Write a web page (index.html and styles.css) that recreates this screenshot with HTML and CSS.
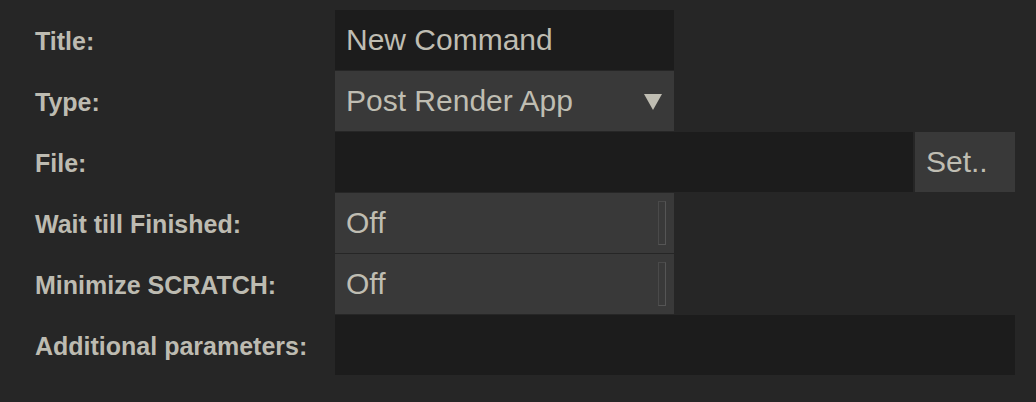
FILE: index.html
```html
<!DOCTYPE html>
<html>
<head>
<meta charset="utf-8">
<link rel="stylesheet" href="styles.css">
</head>
<body>
<div class="form">
  <div class="row">
    <div class="label">Title:</div>
    <div class="field dark narrow"><span class="val">New Command</span></div>
  </div>
  <div class="row">
    <div class="label">Type:</div>
    <div class="field light narrow select"><span class="val">Post Render App</span><span class="arrow"></span></div>
  </div>
  <div class="row">
    <div class="label">File:</div>
    <div class="field dark grow"></div>
    <div class="field light button"><span class="val">Set..</span></div>
  </div>
  <div class="row">
    <div class="label">Wait till Finished:</div>
    <div class="field light narrow toggle"><span class="val">Off</span><span class="knob"></span></div>
  </div>
  <div class="row">
    <div class="label">Minimize SCRATCH:</div>
    <div class="field light narrow toggle"><span class="val">Off</span><span class="knob"></span></div>
  </div>
  <div class="row">
    <div class="label">Additional parameters:</div>
    <div class="field dark wide"></div>
  </div>
</div>
</body>
</html>
```
FILE: styles.css
```css
html, body {
  margin: 0;
  padding: 0;
  background: #262626;
}
body {
  width: 1036px;
  height: 402px;
  overflow: hidden;
  font-family: "Liberation Sans", Arial, sans-serif;
}
.form {
  display: flex;
  flex-direction: column;
  gap: 1px;
  padding-top: 10px;
}
.row {
  display: flex;
  height: 60px;
  align-items: stretch;
}
.label {
  width: 300px;
  padding-left: 35px;
  padding-top: 2px;
  display: flex;
  align-items: center;
  font-weight: bold;
  font-size: 25px;
  color: #bdbbb1;
}
.field {
  display: flex;
  align-items: center;
  font-size: 30px;
  color: #bfbdb2;
  box-sizing: border-box;
  padding-left: 11px;
}
.dark { background: #1c1c1c; }
.light { background: #393939; }
.narrow { width: 339px; }
.grow { width: 578px; }
.button { width: 100px; margin-left: 2px; }
.wide { width: 680px; }
.select { position: relative; }
.arrow {
  position: absolute;
  right: 12px;
  top: 23px;
  width: 0;
  height: 0;
  border-left: 9px solid transparent;
  border-right: 9px solid transparent;
  border-top: 16px solid #bfbdb2;
}
.toggle { position: relative; }
.knob {
  position: absolute;
  right: 8px;
  top: 8px;
  width: 8px;
  height: 44px;
  box-sizing: border-box;
  border: 1px solid #555555;
  border-left-color: #4a4a4a;
  border-top-color: #4a4a4a;
}
```
